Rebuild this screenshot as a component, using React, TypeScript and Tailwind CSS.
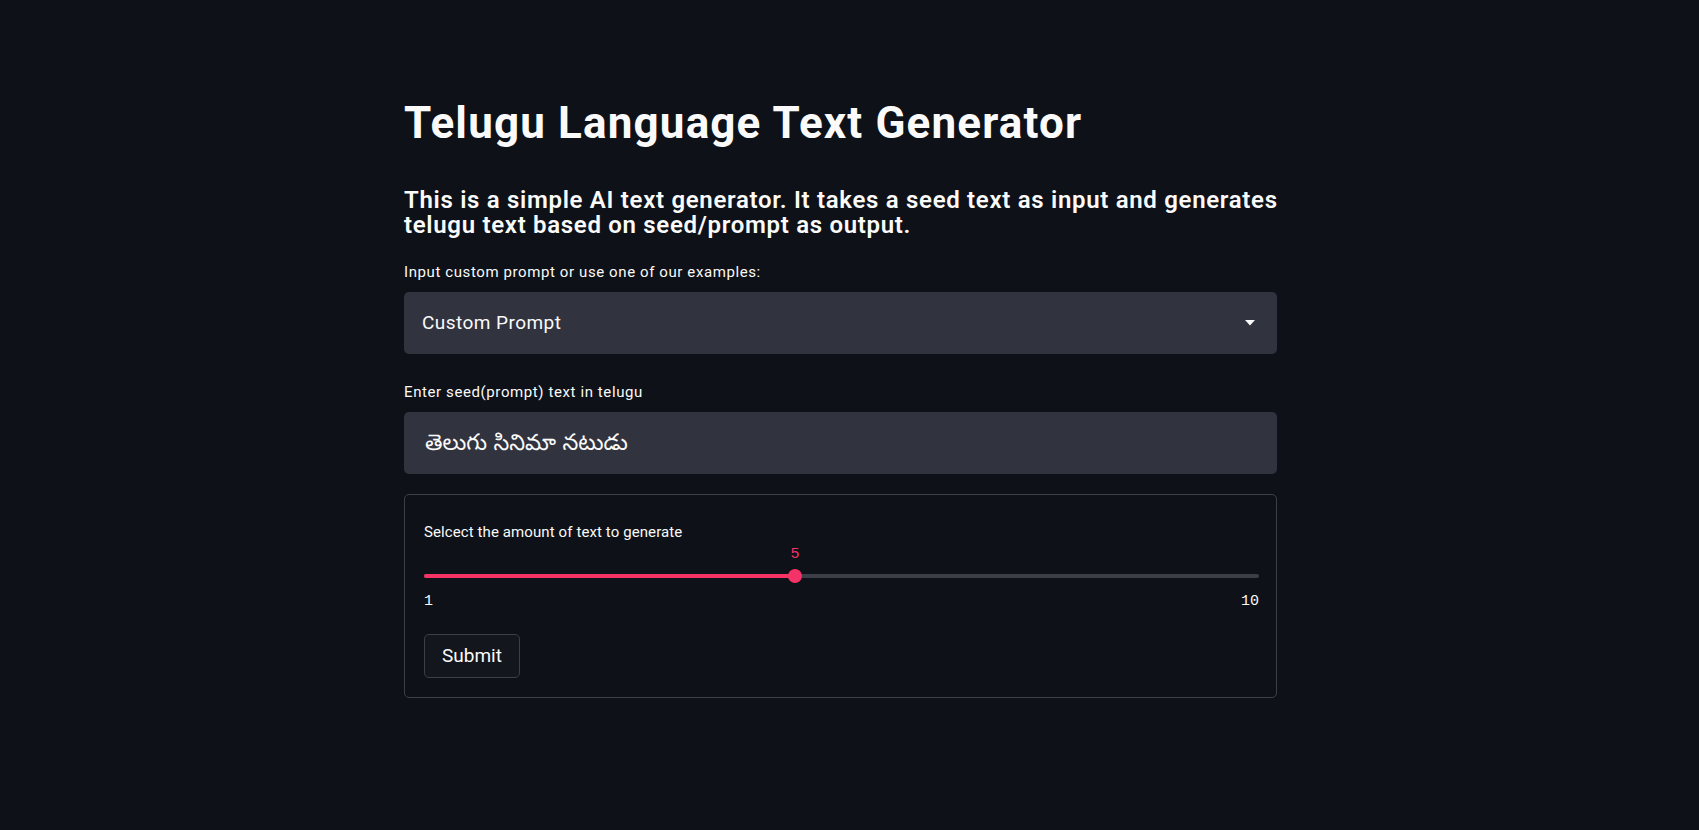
import { useState } from 'react';

const sans = "font-['Roboto','Noto_Sans',sans-serif]";
const mono = "font-['Liberation_Mono','DejaVu_Sans_Mono',monospace]";

export default function App() {
  const [value] = useState(5);
  const pct = ((value - 1) / 9) * 100;

  return (
    <div className={`min-h-[830px] w-full bg-[#0e1117] text-[#fafafa] ${sans}`}>
      <div className="flex justify-center pr-[18px]">
        <main className="w-[873px] pt-[97px] pb-16">
          <h1 className="text-[44px] leading-[52px] font-bold tracking-[1.15px]">
            Telugu Language Text Generator
          </h1>

          <h3 className="mt-[39px] text-[24px] leading-[25px] font-semibold tracking-[0.69px] whitespace-nowrap">
            This is a simple AI text generator. It takes a seed text as input and generates
            <br />
            telugu text based on seed/prompt as output.
          </h3>

          {/* Prompt select */}
          <label className="mt-[24px] block text-[15px] leading-[20px] tracking-[0.6px]">
            Input custom prompt or use one of our examples:
          </label>
          <div className="mt-[10px] flex h-[62px] items-center justify-between rounded-[5px] bg-[#31333f] pl-[18px] pr-[22px]">
            <span className="text-[19px] tracking-[0.45px]">Custom Prompt</span>
            <svg width="10" height="6" viewBox="0 0 10 6" className="fill-[#fafafa]">
              <path d="M0 0h10L5 5.5z" />
            </svg>
          </div>

          {/* Seed text */}
          <label className="mt-[28px] block text-[15px] leading-[20px] tracking-[0.6px]">
            Enter seed(prompt) text in telugu
          </label>
          <div className="mt-[10px] flex h-[62px] items-center rounded-[5px] bg-[#31333f] px-[21px] pt-[5px]">
            <span className="text-[22.5px] font-['Noto_Sans_Telugu','Noto_Sans',sans-serif]">తెలుగు సినిమా నటుడు</span>
          </div>

          {/* Form */}
          <form className="mt-[20px] rounded-[5px] border border-[#3d3f46] pl-[19px] pr-[17px] pt-[27px] pb-[19px]">
            <label className="block text-[15px] leading-[20px] tracking-[0.1px]">
              Selcect the amount of text to generate
            </label>

            <div className="relative h-[44px]">
              <div
                className={`absolute top-[3px] -translate-x-1/2 text-[15px] leading-[20px] text-[#f63366] ${mono}`}
                style={{ left: `${pct}%` }}
              >
                {value}
              </div>
              <div className="absolute left-0 right-0 top-[32px] h-[4px] rounded-full bg-[#3d3f48]" />
              <div
                className="absolute left-0 top-[32px] h-[4px] rounded-full bg-[#f63366]"
                style={{ width: `${pct}%` }}
              />
              <div
                className="absolute top-[27px] h-[14px] w-[14px] -translate-x-1/2 rounded-full bg-[#f63366]"
                style={{ left: `${pct}%` }}
              />
            </div>

            <div className={`mt-[6px] flex justify-between text-[15px] leading-[20px] ${mono}`}>
              <span>1</span>
              <span>10</span>
            </div>

            <button
              type="button"
              className="mt-[22px] flex h-[44px] w-[96px] items-center justify-center rounded-[5px] border border-[#3d3f46] bg-[#13161d] text-[19px]"
            >
              Submit
            </button>
          </form>
        </main>
      </div>
    </div>
  );
}
